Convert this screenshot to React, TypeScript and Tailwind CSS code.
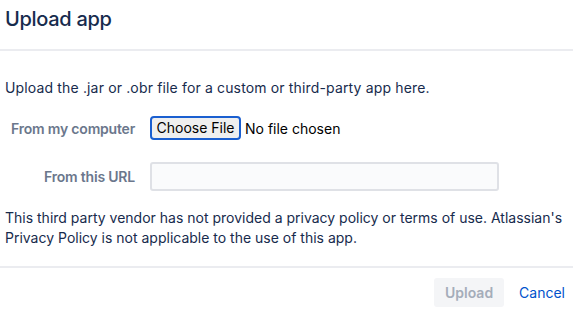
import React from "react";

export default function App() {
  return (
    <div className="w-[573px] h-[315px] bg-white text-[#172b4d] font-['Inter','Liberation_Sans',sans-serif] overflow-hidden">
      <div className="h-[49px] px-[5px] pt-[7px]">
        <h1 className="text-[20px] font-medium leading-6 tracking-[-0.3px]">Upload app</h1>
      </div>
      <div className="h-[2px] bg-[#ebecf0]" />
      <div className="px-[5px] pt-[27px]">
        <p className="text-[14px] leading-5 tracking-[0.15px]">Upload the .jar or .obr file for a custom or third-party app here.</p>
        <div className="mt-[18px] flex items-center h-[24px]">
          <div className="w-[130px] text-right text-[14px] font-semibold tracking-[-0.2px] text-[#6b778c]">From my computer</div>
          <div className="ml-[15px] flex items-center">
            <button className="h-[24px] w-[91px] rounded-[4px] border-[2px] border-[#1a5fd0] bg-[#efefef] text-[14px] text-black leading-none">Choose File</button>
            <span className="ml-[4px] text-[14px] text-black">No file chosen</span>
          </div>
        </div>
        <div className="mt-[22px] flex items-center h-[29px]">
          <div className="w-[130px] text-right text-[14px] font-semibold tracking-[-0.2px] text-[#6b778c]">From this URL</div>
          <input className="ml-[15px] w-[349px] h-[29px] rounded-[3px] border-[2px] border-[#dfe1e6] bg-[#fafbfc] outline-none" />
        </div>
        <p className="mt-[17px] text-[14px] leading-[20px]">
          This third party vendor has not provided a privacy policy or terms of use. Atlassian's Privacy Policy is not applicable to the use of this app.
        </p>
      </div>
      <div className="mt-[18px] h-[2px] bg-[#ebecf0]" />
      <div className="mt-[10px] flex justify-end items-center pr-[8px] gap-[15px]">
        <button className="h-[29px] w-[70px] rounded-[3px] bg-[#f4f5f7] text-[#a5adba] text-[14px] font-semibold">Upload</button>
        <button className="text-[#0052cc] text-[14px] px-0">Cancel</button>
      </div>
    </div>
  );
}
